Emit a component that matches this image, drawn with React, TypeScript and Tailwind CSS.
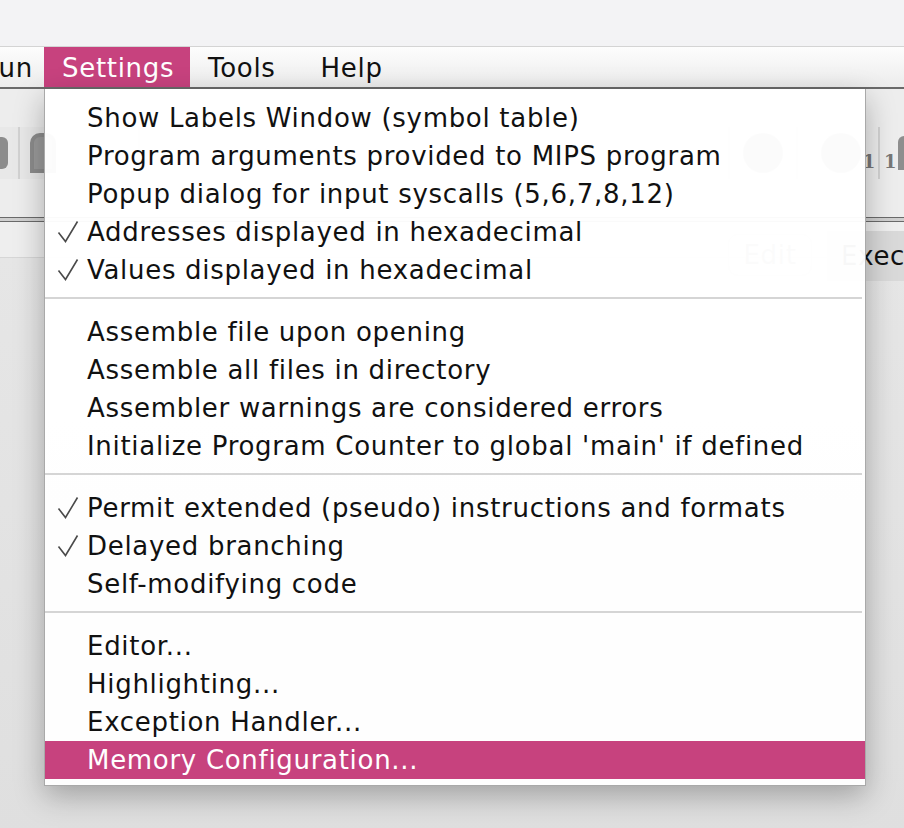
import React from 'react'

type Item = { label: string; checked?: boolean; active?: boolean }

const GROUPS: Item[][] = [
  [
    { label: 'Show Labels Window (symbol table)' },
    { label: 'Program arguments provided to MIPS program' },
    { label: 'Popup dialog for input syscalls (5,6,7,8,12)' },
    { label: 'Addresses displayed in hexadecimal', checked: true },
    { label: 'Values displayed in hexadecimal', checked: true },
  ],
  [
    { label: 'Assemble file upon opening' },
    { label: 'Assemble all files in directory' },
    { label: 'Assembler warnings are considered errors' },
    { label: "Initialize Program Counter to global 'main' if defined" },
  ],
  [
    { label: 'Permit extended (pseudo) instructions and formats', checked: true },
    { label: 'Delayed branching', checked: true },
    { label: 'Self-modifying code' },
  ],
  [
    { label: 'Editor...' },
    { label: 'Highlighting...' },
    { label: 'Exception Handler...' },
    { label: 'Memory Configuration...', active: true },
  ],
]

function Check() {
  return (
    <svg width="22" height="22" viewBox="0 0 22 22" className="shrink-0">
      <path d="M1.5 11.5 L8.5 20.5 L20.5 0.5" fill="none" stroke="#4a4a4a" strokeWidth="1.6" />
    </svg>
  )
}

function MenuRow({ item }: { item: Item }) {
  return (
    <div
      className={
        'flex h-[38px] items-center ' +
        (item.active ? 'bg-[#c7427e] text-white' : 'text-[#111]')
      }
    >
      <div className="flex w-[42px] shrink-0 justify-end pr-[8px]">{item.checked && <Check />}</div>
      <span className="whitespace-nowrap">{item.label}</span>
    </div>
  )
}

export default function App() {
  return (
    <div className="relative h-[828px] w-[904px] overflow-hidden bg-[#dfdfdf] font-['Lucida_Grande','DejaVu_Sans',sans-serif] text-[26px] tracking-[0.7px]">
      {/* window title strip */}
      <div className="h-[47px] border-b border-[#d4d4d4] bg-[#f3f3f5]" />

      {/* menu bar */}
      <div className="flex h-[42px] items-stretch border-b-2 border-[#6a6a6a] bg-gradient-to-b from-[#fdfdfd] to-[#ececec] pt-[3px] text-[#111]">
        <div className="ml-[-19px] flex w-[63px] items-center">Run</div>
        <div className="mt-[-3px] flex w-[146px] items-center bg-[#c7427e] pl-[18px] pt-[3px] text-white">Settings</div>
        <div className="flex items-center pl-[18px]">Tools</div>
        <div className="flex items-center pl-[45px]">Help</div>
      </div>

      {/* toolbar */}
      <div className="h-[128px] bg-[#ededed] pt-[38px]">
        <div className="flex h-[52px] items-stretch">
          <div className="flex w-[20px] items-center border-r-2 border-[#d2d2d2] bg-[#e8e8e8]">
            <div className="h-[32px] w-[8px] rounded-r-[6px] bg-[#8c8c8c]" />
          </div>
          <div className="flex w-[120px] items-center border-r-2 border-[#d2d2d2] bg-[#e8e8e8] pl-[10px]">
            <div className="h-[40px] w-[26px] rounded-t-[10px] border-4 border-[#8c8c8c] bg-[#9a9a9a]" />
          </div>
          <div className="flex-1" />
          <div className="flex w-[70px] items-center justify-center border-x-2 border-[#d2d2d2]">
            <div className="h-[40px] w-[40px] rounded-full bg-[#8e8e8e]" />
          </div>
          <div className="flex w-[82px] items-center justify-end gap-[2px] border-r-2 border-[#d2d2d2] pr-[2px]">
            <div className="h-[40px] w-[40px] rounded-full bg-[#8e8e8e]" />
            <span className="self-end pb-[4px] font-['DejaVu_Serif',serif] text-[18px] font-bold text-[#777]">1</span>
          </div>
          <div className="flex w-[24px] items-center gap-[1px] pl-[4px]">
            <span className="self-end pb-[4px] font-['DejaVu_Serif',serif] text-[18px] font-bold text-[#777]">1</span>
            <div className="h-[34px] w-[14px] rounded-tl-full bg-[#8e8e8e]" />
          </div>
        </div>
      </div>

      {/* split double rule */}
      <div className="h-[5px] border-y border-[#6a6a6a] bg-[#cfcfcf]" />

      {/* tabs */}
      <div className="flex h-[36px] items-start border-b border-[#d6d6d6] bg-[#eeeeee]">
        <div className="flex-1" />
        <div className="mt-[12px] flex h-[42px] w-[84px] shrink-0 items-center justify-center rounded-[10px] border border-[#d0d0d0] text-[#888]">Edit</div>
        <div className="ml-[15px] mt-[9px] flex h-[50px] w-[77px] shrink-0 items-center overflow-hidden bg-[#d9d9d9] pl-[14px] text-[#111]">Execute</div>
      </div>
      <div className="h-full bg-gradient-to-b from-[#e6e6e6] to-[#dcdcdc]" />

      {/* Settings dropdown */}
      <div className="absolute left-[44px] top-[89px] h-[697px] w-[822px] border-x border-b border-[#a9a9a9] bg-white/[0.97] pb-[8px] pt-[10px] shadow-[0_10px_28px_rgba(0,0,0,0.28)]">
        {GROUPS.map((group, gi) => (
          <div key={gi}>
            {gi > 0 && <div className="mb-[14px] mr-[3px] mt-[8px] h-[2px] bg-[#d5d5d5]" />}
            {group.map((item) => (
              <MenuRow key={item.label} item={item} />
            ))}
          </div>
        ))}
      </div>
    </div>
  )
}
